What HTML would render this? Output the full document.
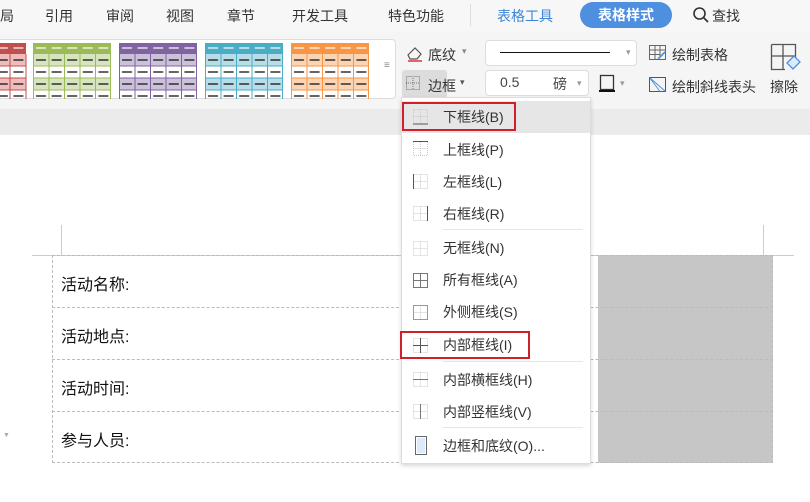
<!DOCTYPE html>
<html><head><meta charset="utf-8"><style>
*{margin:0;padding:0;box-sizing:border-box}
body{width:810px;height:502px;overflow:hidden;background:#fff;font-family:"Liberation Sans","Noto Sans CJK SC",sans-serif;position:relative;color:#333}
.a{position:absolute;white-space:nowrap}
.tab{font-size:14px;top:6px;color:#333}
.mi{position:absolute;left:443px;font-size:14px;color:#333}
</style></head><body>
<div class="a" style="left:0;top:0;width:810px;height:32px;background:#f7f7f7"></div>
<div class="a tab" style="left:0">局</div>
<div class="a tab" style="left:45px">引用</div>
<div class="a tab" style="left:106px">审阅</div>
<div class="a tab" style="left:166px">视图</div>
<div class="a tab" style="left:227px">章节</div>
<div class="a tab" style="left:292px">开发工具</div>
<div class="a tab" style="left:388px">特色功能</div>
<div class="a" style="left:470px;top:4px;width:1px;height:22px;background:#ddd"></div>
<div class="a tab" style="left:497px;color:#3b86d8">表格工具</div>
<div class="a" style="left:580px;top:2px;width:92px;height:26px;border-radius:13px;background:#4f8fe0;color:#fff;font-size:14px;font-weight:bold;text-align:center;line-height:26px">表格样式</div>
<svg class="a" style="left:692px;top:6px" width="18" height="18"><circle cx="7.5" cy="7.5" r="5.5" fill="none" stroke="#333" stroke-width="1.6"/><line x1="11.5" y1="11.5" x2="16" y2="16" stroke="#333" stroke-width="1.8"/></svg>
<div class="a tab" style="left:712px">查找</div>
<div class="a" style="left:0;top:32px;width:810px;height:77px;background:#f5f5f5"></div>
<div class="a" style="left:0;top:109px;width:810px;height:26px;background:#ebebeb"></div>
<div class="a" style="left:-5px;top:39px;width:401px;height:60px;background:#fff;border:1px solid #ddd;border-radius:4px"></div>
<svg class="a" style="left:0;top:43px" width="372" height="56">
<defs>
<pattern id="d0" x="-52" y="11" width="15.6" height="12" patternUnits="userSpaceOnUse"><line x1="3" y1="6" x2="13" y2="6" stroke="#222" stroke-width="1.4"/></pattern>
<pattern id="d1" x="33" y="11" width="15.6" height="12" patternUnits="userSpaceOnUse"><line x1="3" y1="6" x2="13" y2="6" stroke="#222" stroke-width="1.4"/></pattern>
<pattern id="d2" x="119" y="11" width="15.6" height="12" patternUnits="userSpaceOnUse"><line x1="3" y1="6" x2="13" y2="6" stroke="#222" stroke-width="1.4"/></pattern>
<pattern id="d3" x="205" y="11" width="15.6" height="12" patternUnits="userSpaceOnUse"><line x1="3" y1="6" x2="13" y2="6" stroke="#222" stroke-width="1.4"/></pattern>
<pattern id="d4" x="291" y="11" width="15.6" height="12" patternUnits="userSpaceOnUse"><line x1="3" y1="6" x2="13" y2="6" stroke="#222" stroke-width="1.4"/></pattern>
<pattern id="w0" x="-52" width="15.6" height="11" patternUnits="userSpaceOnUse"><line x1="3" y1="5" x2="13" y2="5" stroke="#fff" stroke-width="1.2"/></pattern>
<pattern id="w1" x="33" width="15.6" height="11" patternUnits="userSpaceOnUse"><line x1="3" y1="5" x2="13" y2="5" stroke="#fff" stroke-width="1.2"/></pattern>
<pattern id="w2" x="119" width="15.6" height="11" patternUnits="userSpaceOnUse"><line x1="3" y1="5" x2="13" y2="5" stroke="#fff" stroke-width="1.2"/></pattern>
<pattern id="w3" x="205" width="15.6" height="11" patternUnits="userSpaceOnUse"><line x1="3" y1="5" x2="13" y2="5" stroke="#fff" stroke-width="1.2"/></pattern>
<pattern id="w4" x="291" width="15.6" height="11" patternUnits="userSpaceOnUse"><line x1="3" y1="5" x2="13" y2="5" stroke="#fff" stroke-width="1.2"/></pattern>
</defs>
<rect x="-52" y="0" width="78" height="11" fill="#c0504d"/><rect x="-52" y="11" width="78" height="12" fill="#efbcbb"/><rect x="-52" y="35" width="78" height="12" fill="#efbcbb"/>
<rect x="33" y="0" width="78" height="11" fill="#9bbb59"/><rect x="33" y="11" width="78" height="12" fill="#d7e4bd"/><rect x="33" y="35" width="78" height="12" fill="#d7e4bd"/>
<rect x="119" y="0" width="78" height="11" fill="#8064a2"/><rect x="119" y="11" width="78" height="12" fill="#ccc1da"/><rect x="119" y="35" width="78" height="12" fill="#ccc1da"/>
<rect x="205" y="0" width="78" height="11" fill="#4bacc6"/><rect x="205" y="11" width="78" height="12" fill="#b7dde8"/><rect x="205" y="35" width="78" height="12" fill="#b7dde8"/>
<rect x="291" y="0" width="78" height="11" fill="#f79646"/><rect x="291" y="11" width="78" height="12" fill="#fbd4b4"/><rect x="291" y="35" width="78" height="12" fill="#fbd4b4"/>
<rect x="-52" y="11" width="78" height="48" fill="url(#d0)"/><rect x="33" y="11" width="78" height="48" fill="url(#d1)"/><rect x="119" y="11" width="78" height="48" fill="url(#d2)"/><rect x="205" y="11" width="78" height="48" fill="url(#d3)"/><rect x="291" y="11" width="78" height="48" fill="url(#d4)"/>
<rect x="-52" y="0" width="78" height="11" fill="url(#w0)"/><rect x="33" y="0" width="78" height="11" fill="url(#w1)"/><rect x="119" y="0" width="78" height="11" fill="url(#w2)"/><rect x="205" y="0" width="78" height="11" fill="url(#w3)"/><rect x="291" y="0" width="78" height="11" fill="url(#w4)"/>
<g stroke-width="1" fill="none">
<path d="M10 11V56M26 11V56M0 23H26M0 35H26M0 47H26" stroke="#c0504d"/>
<path d="M33.5 0V56M49 11V56M64.5 11V56M80 11V56M95.5 11V56M110.5 0V56M33 23H111M33 35H111M33 47H111" stroke="#9bbb59"/>
<path d="M119.5 0V56M135 11V56M150.5 11V56M166 11V56M181.5 11V56M196.5 0V56M119 23H197M119 35H197M119 47H197" stroke="#8064a2"/>
<path d="M205.5 0V56M221 11V56M236.5 11V56M252 11V56M267.5 11V56M282.5 0V56M205 23H283M205 35H283M205 47H283" stroke="#4bacc6"/>
<path d="M291.5 0V56M307 11V56M322.5 11V56M338 11V56M353.5 11V56M368.5 0V56M291 23H369M291 35H369M291 47H369" stroke="#f79646"/>
</g></svg>
<div class="a" style="left:384px;top:60px;font-size:10px;color:#888">≡</div>
<svg class="a" style="left:405px;top:44px" width="20" height="20"><path d="M3 11L10 4L16 10L12 15H5Z" fill="none" stroke="#555" stroke-width="1.2"/><line x1="3" y1="17" x2="17" y2="17" stroke="#d33" stroke-width="1.5"/></svg>
<div class="a" style="left:428px;top:45px;font-size:14px">底纹</div><div class="a" style="left:462px;top:46px;font-size:9px;color:#888">▾</div>
<div class="a" style="left:402px;top:70px;width:45px;height:28px;background:#dcdcdc;border-radius:3px"></div>
<svg class="a" style="left:405px;top:75px" width="16" height="16"><rect x="1.5" y="1.5" width="13" height="13" fill="none" stroke="#777" stroke-dasharray="1 1"/><path d="M8 1V15M1 8H15" stroke="#777" stroke-dasharray="1 1"/></svg>
<div class="a" style="left:428px;top:76px;font-size:14px">边框</div><div class="a" style="left:460px;top:77px;font-size:9px;color:#555">▾</div>
<div class="a" style="left:485px;top:40px;width:152px;height:26px;background:#fff;border:1px solid #ddd;border-radius:4px"></div>
<div class="a" style="left:500px;top:52px;width:110px;height:1px;background:#111"></div>
<div class="a" style="left:626px;top:47px;font-size:9px;color:#999">▾</div>
<div class="a" style="left:485px;top:70px;width:104px;height:26px;background:#fff;border:1px solid #ddd;border-radius:4px"></div>
<div class="a" style="left:500px;top:74px;font-size:14px;color:#444">0.5</div>
<div class="a" style="left:553px;top:74px;font-size:14px;color:#444">磅</div>
<div class="a" style="left:577px;top:78px;font-size:9px;color:#999">▾</div>
<svg class="a" style="left:598px;top:74px" width="20" height="20"><rect x="2.5" y="1.5" width="13" height="14" fill="none" stroke="#333" stroke-width="1.3"/><rect x="1" y="16" width="16" height="2" fill="#111"/></svg>
<div class="a" style="left:620px;top:78px;font-size:9px;color:#999">▾</div>
<svg class="a" style="left:648px;top:44px" width="20" height="18"><path d="M1.5 1.5H17.5V15.5H1.5ZM1.5 6H17.5M1.5 10.5H12M7 1.5V15.5M12 1.5V12" fill="none" stroke="#666"/><path d="M10 15L17 8" stroke="#4f8fe0" stroke-width="1.6"/></svg>
<div class="a" style="left:672px;top:45px;font-size:14px">绘制表格</div>
<svg class="a" style="left:648px;top:76px" width="20" height="18"><rect x="1.5" y="1.5" width="16" height="14" fill="none" stroke="#555"/><path d="M1.5 1.5L17.5 15.5M1.5 1.5L12 15.5" stroke="#4f8fe0"/></svg>
<div class="a" style="left:672px;top:77px;font-size:14px">绘制斜线表头</div>
<svg class="a" style="left:769px;top:42px" width="34" height="30"><path d="M2.5 2.5H26.5V16M2.5 2.5V27.5H16M14 2.5V27.5M2.5 14H26.5" fill="none" stroke="#555" stroke-width="1.3"/><path d="M18 21L25 14L31 20L24 27Z" fill="#dceafb" stroke="#4f8fe0" stroke-width="1.3"/></svg>
<div class="a" style="left:770px;top:77px;font-size:14px">擦除</div>
<div class="a" style="left:32px;top:255px;width:762px;height:1px;background:#ccc"></div>
<div class="a" style="left:61px;top:225px;width:1px;height:30px;background:#ccc"></div>
<div class="a" style="left:763px;top:225px;width:1px;height:30px;background:#ccc"></div>
<div class="a" style="left:598px;top:255px;width:175px;height:208px;background:#c6c6c7"></div>
<div class="a" style="left:52px;top:255px;width:721px;height:208px;border:1px dashed #bbb"></div>
<div class="a" style="left:52px;top:307px;width:721px;height:0;border-top:1px dashed #bbb"></div>
<div class="a" style="left:52px;top:359px;width:721px;height:0;border-top:1px dashed #bbb"></div>
<div class="a" style="left:52px;top:411px;width:721px;height:0;border-top:1px dashed #bbb"></div>
<div class="a" style="left:61px;top:271px;font-size:16px;color:#111">活动名称:</div>
<div class="a" style="left:61px;top:323px;font-size:16px;color:#111">活动地点:</div>
<div class="a" style="left:61px;top:375px;font-size:16px;color:#111">活动时间:</div>
<div class="a" style="left:61px;top:427px;font-size:16px;color:#111">参与人员:</div>
<div class="a" style="left:3px;top:432px;font-size:7px;color:#aaa">▼</div>
<div class="a" style="left:401px;top:97px;width:190px;height:367px;background:#fff;border:1px solid #ddd;box-shadow:0 2px 4px rgba(0,0,0,.15)"></div>
<div class="a" style="left:402px;top:101px;width:188px;height:32px;background:#e6e6e6"></div>
<div class="a" style="left:402px;top:102px;width:114px;height:29px;border:2px solid #d0202a"></div>
<div class="a" style="left:400px;top:331px;width:130px;height:28px;border:2px solid #d0202a"></div>
<div class="a" style="left:443px;top:229px;width:140px;height:1px;background:#e6e6e6"></div>
<div class="a" style="left:443px;top:361px;width:140px;height:1px;background:#e6e6e6"></div>
<div class="a" style="left:443px;top:427px;width:140px;height:1px;background:#e6e6e6"></div>
<svg class="a" style="left:412px;top:100px" width="24" height="360" fill="none" stroke-width="1">
<g stroke="#c8c8c8" stroke-dasharray="1 1">
<path d="M1.5 9.5H15.5V23.5M1.5 9.5V23.5M8.5 9.5V23.5M1.5 16.5H15.5"/>
<path d="M1.5 42V55.5H15.5V42M8.5 42V55.5M1.5 48.5H15.5"/>
<path d="M1.5 74.5H15.5V88.5H1.5M8.5 74.5V88.5M1.5 81.5H15.5"/>
<path d="M15.5 106.5H1.5V120.5H15.5M8.5 106.5V120.5M1.5 113.5H15.5"/>
<path d="M1.5 141.5H15.5V155.5H1.5ZM8.5 141.5V155.5M1.5 148.5H15.5"/>
<path d="M8.5 205.5V219.5M1.5 212.5H15.5"/>
<path d="M1.5 238.5H15.5V252.5H1.5Z"/>
<path d="M1.5 272.5H15.5V286.5H1.5ZM8.5 272.5V286.5"/>
<path d="M1.5 304.5H15.5V318.5H1.5ZM1.5 311.5H15.5"/>
</g>
<g stroke="#555">
<path d="M1 24H16"/><path d="M1 41.5H16"/><path d="M1.5 74V89"/><path d="M15.5 106V121"/>
<path d="M1.5 173.5H15.5V187.5H1.5ZM8.5 173.5V187.5M1.5 180.5H15.5" stroke="#777"/>
<path d="M1.5 205.5H15.5V219.5H1.5Z" stroke="#999"/>
<path d="M8.5 238V253M1 245.5H16"/>
<path d="M1 279.5H16" stroke="#777"/><path d="M8.5 304V319" stroke="#777"/>
</g><path d="M5 338H13V353H5Z" fill="#dceafb" stroke="none"/>
<path d="M3.5 336.5H14.5V354.5H3.5Z" stroke="#666"/>
</svg>
<div class="mi" style="top:107px">下框线(B)</div>
<div class="mi" style="top:140px">上框线(P)</div>
<div class="mi" style="top:172px">左框线(L)</div>
<div class="mi" style="top:204px">右框线(R)</div>
<div class="mi" style="top:238px">无框线(N)</div>
<div class="mi" style="top:270px">所有框线(A)</div>
<div class="mi" style="top:302px">外侧框线(S)</div>
<div class="mi" style="top:335px">内部框线(I)</div>
<div class="mi" style="top:370px">内部横框线(H)</div>
<div class="mi" style="top:402px">内部竖框线(V)</div>
<div class="mi" style="top:436px">边框和底纹(O)...</div>
</body></html>
